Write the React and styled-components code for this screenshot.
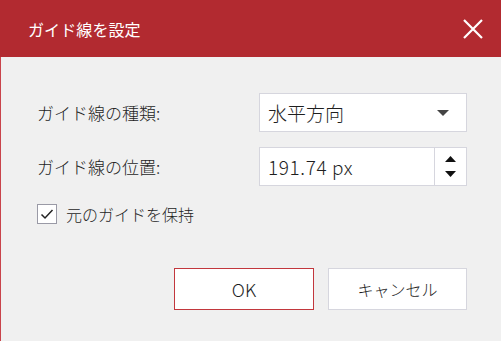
import styled, { createGlobalStyle } from 'styled-components';

const GlobalStyle = createGlobalStyle`
  html, body { margin: 0; padding: 0; background: #f0f0f0; }
  body { font-family: "Noto Sans CJK JP", "Noto Sans", sans-serif; font-weight: 300; }
`;

const Dialog = styled.div`
  width: 501px;
  height: 341px;
  box-sizing: border-box;
  border-left: 1px solid #c9444b;
  background: #f0f0f0;
  display: flex;
  flex-direction: column;
`;

const Header = styled.div`
  height: 57px;
  background: #b22a30;
  color: #fff;
  display: flex;
  align-items: center;
  justify-content: space-between;
  padding: 0 17px 0 28px;
  margin-left: -1px;
  font-size: 16px;
`;

const Title = styled.div`
  letter-spacing: 0.1px;
  font-weight: 400;
`;

const CloseButton = styled.button`
  border: none;
  background: none;
  padding: 0;
  width: 22px;
  height: 22px;
  display: flex;
  cursor: pointer;
`;

const Body = styled.div`
  padding: 36px 34px 0 36px;
  display: flex;
  flex-direction: column;
`;

const Row = styled.div`
  display: flex;
  align-items: center;
  justify-content: space-between;
  margin-bottom: 15px;
`;

const Label = styled.div`
  font-size: 17px;
  color: #1e1e1e;
`;

const Field = styled.div`
  width: 208px;
  height: 39px;
  box-sizing: border-box;
  background: #fff;
  border: 1px solid #d6d6de;
  display: flex;
  align-items: center;
  font-size: 19px;
  color: #1e1e1e;
`;

const FieldText = styled.div`
  flex: 1;
  padding-left: 8px;
  letter-spacing: ${p => (p.num ? '0.6px' : '0')};
`;

const ArrowBox = styled.div`
  width: 31px;
  align-self: stretch;
  display: flex;
  flex-direction: column;
  align-items: center;
  justify-content: center;
  gap: ${p => (p.spin ? '9px' : '0')};
  border-left: ${p => (p.spin ? '1px solid #d6d6de' : 'none')};
  padding-right: ${p => (p.spin ? '0' : '8px')};
`;

const CheckRow = styled.label`
  display: flex;
  align-items: center;
  gap: 9px;
  font-size: 16px;
  color: #1e1e1e;
  margin-top: 1px;
`;

const Box = styled.span`
  width: 20px;
  height: 20px;
  box-sizing: border-box;
  border: 1px solid #9a9aa6;
  background: #fff;
  display: flex;
  align-items: center;
  justify-content: center;
`;

const Buttons = styled.div`
  display: flex;
  justify-content: flex-end;
  gap: 14px;
  margin-top: 42px;
`;

const Button = styled.button`
  width: ${p => (p.primary ? '140px' : '139px')};
  height: 42px;
  background: #fff;
  border: 1px solid ${p => (p.primary ? '#c2373d' : '#d6d6de')};
  font-family: inherit;
  font-weight: 300;
  font-size: ${p => (p.primary ? '18px' : '16px')};
  color: #1e1e1e;
  cursor: pointer;
`;

const Tri = ({ up, w = 12, h = 6, color = '#444' }) => (
  <svg width={w} height={h} viewBox={`0 0 ${w} ${h}`}>
    <polygon points={up ? `0,${h} ${w},${h} ${w / 2},0` : `0,0 ${w},0 ${w / 2},${h}`} fill={color} />
  </svg>
);

export default function App() {
  return (
    <Dialog>
      <GlobalStyle />
      <Header>
        <Title>ガイド線を設定</Title>
        <CloseButton>
          <svg width="22" height="22" viewBox="0 0 22 22">
            <path d="M2 2 L20 20 M20 2 L2 20" stroke="#fff" strokeWidth="2.2" />
          </svg>
        </CloseButton>
      </Header>
      <Body>
        <Row>
          <Label>ガイド線の種類:</Label>
          <Field>
            <FieldText>水平方向</FieldText>
            <ArrowBox>
              <Tri />
            </ArrowBox>
          </Field>
        </Row>
        <Row>
          <Label>ガイド線の位置:</Label>
          <Field>
            <FieldText num>191.74 px</FieldText>
            <ArrowBox spin>
              <Tri up w={11} h={6} color="#111" />
              <Tri w={11} h={6} color="#111" />
            </ArrowBox>
          </Field>
        </Row>
        <CheckRow>
          <Box>
            <svg width="14" height="12" viewBox="0 0 14 12">
              <path d="M1.5 6.5 L5 10 L12.5 2" stroke="#222" strokeWidth="1.5" fill="none" />
            </svg>
          </Box>
          元のガイドを保持
        </CheckRow>
        <Buttons>
          <Button primary>OK</Button>
          <Button>キャンセル</Button>
        </Buttons>
      </Body>
    </Dialog>
  );
}
